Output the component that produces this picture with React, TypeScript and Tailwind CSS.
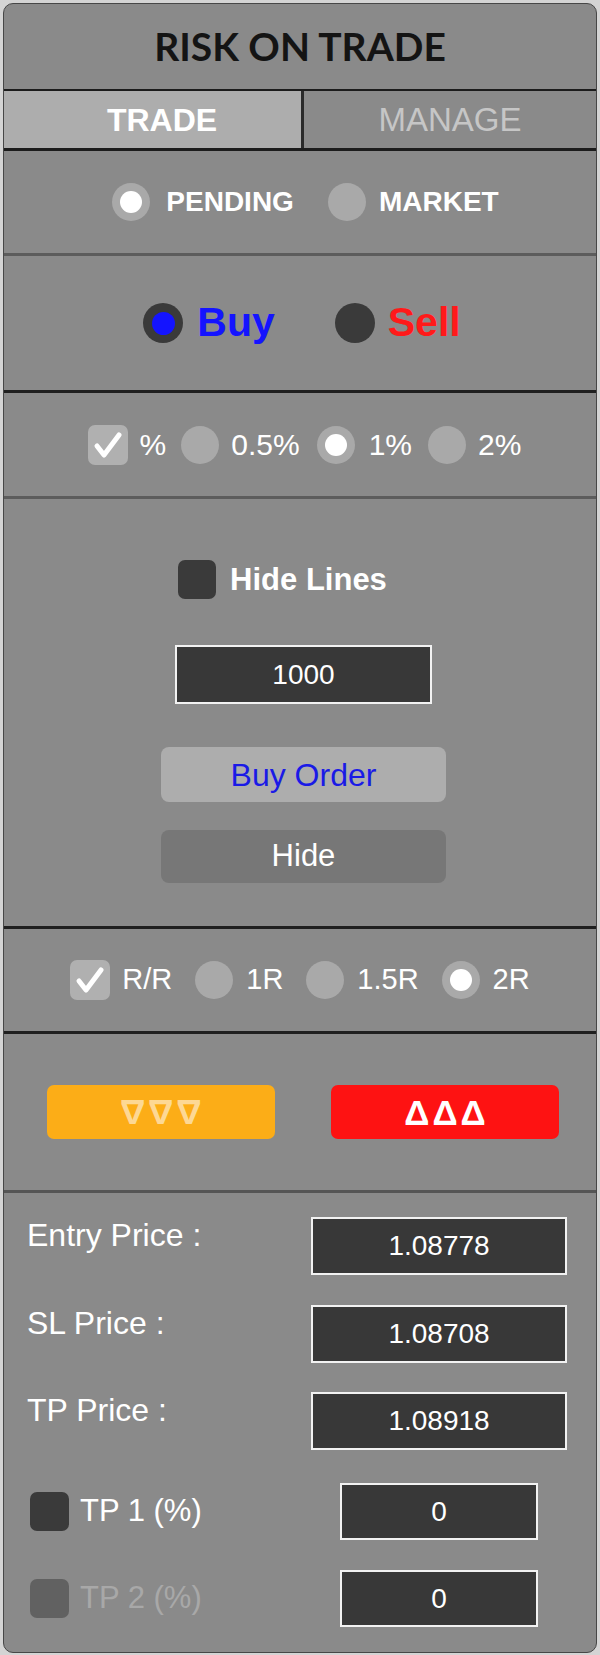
import React from "react"

function LightRadio({ checked }: { checked?: boolean }) {
  return (
    <span className="flex h-[38px] w-[38px] shrink-0 items-center justify-center rounded-full bg-[#a9a9a9]">
      {checked && <span className="h-[22px] w-[22px] rounded-full bg-white" />}
    </span>
  )
}

function CheckMark() {
  return (
    <svg width="40" height="40" viewBox="0 0 40 40" fill="none">
      <path d="M9 21 L16 30 L31 10" stroke="white" strokeWidth={5} strokeLinecap="round" strokeLinejoin="round" />
    </svg>
  )
}

function LightCheck() {
  return (
    <span className="flex h-[40px] w-[40px] shrink-0 items-center justify-center rounded-[7px] bg-[#b0b0b0]">
      <CheckMark />
    </span>
  )
}

function ValueBox({ value, className }: { value: string; className: string }) {
  return (
    <div
      className={
        "flex items-center justify-center border-2 border-[#f2f2f2] bg-[#383838] text-[28px] leading-none text-white " +
        className
      }
    >
      {value}
    </div>
  )
}

function PriceRow({ label, value }: { label: string; value: string }) {
  return (
    <div className="flex items-start justify-between pl-[23px] pr-[29px]">
      <span className="text-[32px] leading-[36px] text-white">{label}</span>
      <ValueBox value={value} className="h-[58px] w-[256px]" />
    </div>
  )
}

function TpRow({ label, disabled }: { label: string; disabled?: boolean }) {
  return (
    <div className="flex items-center justify-between pl-[26px] pr-[29px]">
      <div className="flex items-center gap-[11px]">
        <span className={disabled ? "h-[39px] w-[39px] rounded-[7px] bg-[#616161]" : "h-[39px] w-[39px] rounded-[7px] bg-[#3a3a3a]"} />
        <span className={disabled ? "text-[31px] text-[#a8a8a8]" : "text-[31px] text-white"}>{label}</span>
      </div>
      <div className="flex w-[256px] justify-center">
        <ValueBox value="0" className="h-[57px] w-[198px]" />
      </div>
    </div>
  )
}

export default function App() {
  return (
    <div className="h-[1655px] w-[600px] bg-[#d4d4d4] pl-[3px] pt-[3px] font-['Liberation_Sans',Arial,sans-serif]">
      <div className="flex h-[1650px] w-[594px] flex-col overflow-hidden rounded-[10px] border border-[#474747] bg-[#8a8a8a]">
        {/* title */}
        <div className="flex h-[87px] shrink-0 items-center justify-center border-b-2 border-[#1c1c1c] font-['Lato',sans-serif] text-[39px] font-bold text-[#141414]">
          RISK ON TRADE
        </div>

        {/* tabs */}
        <div className="flex h-[60px] shrink-0 border-b-[3px] border-[#1c1c1c]">
          <div className="flex w-[300px] items-center justify-center border-r-[3px] border-[#2a2a2a] bg-[#adadad] pl-[19px] text-[32px] font-bold text-white">
            TRADE
          </div>
          <div className="flex flex-1 items-center justify-center text-[33px] text-[#c6c6c6]">MANAGE</div>
        </div>

        {/* order type */}
        <div className="flex h-[105px] shrink-0 items-center justify-center border-b-[3px] border-[#5c5c5c] pl-[11px] font-bold text-white">
          <LightRadio checked />
          <span className="ml-[16px] text-[28px]">PENDING</span>
          <span className="ml-[34px]">
            <LightRadio />
          </span>
          <span className="ml-[13px] text-[28px]">MARKET</span>
        </div>

        {/* direction */}
        <div className="flex h-[137px] shrink-0 items-center justify-center border-b-[3px] border-[#1f1f1f] pl-[4px] text-[41px] font-bold">
          <span className="flex h-[40px] w-[40px] items-center justify-center rounded-full bg-[#3a3a3a]">
            <span className="h-[23px] w-[23px] rounded-full bg-[#1414ff]" />
          </span>
          <span className="ml-[14px] text-[#1414ff]">Buy</span>
          <span className="ml-[60px] h-[40px] w-[40px] rounded-full bg-[#3a3a3a]" />
          <span className="ml-[13px] text-[#ff1a1a]">Sell</span>
        </div>

        {/* risk */}
        <div className="flex h-[106px] shrink-0 items-center justify-center border-b-[3px] border-[#5c5c5c] pl-[9px] text-[30px] text-white">
          <LightCheck />
          <span className="ml-[12px]">%</span>
          <span className="ml-[15px]">
            <LightRadio />
          </span>
          <span className="ml-[12px]">0.5%</span>
          <span className="ml-[17px]">
            <LightRadio checked />
          </span>
          <span className="ml-[14px]">1%</span>
          <span className="ml-[16px]">
            <LightRadio />
          </span>
          <span className="ml-[12px]">2%</span>
        </div>

        {/* lines / lot / order */}
        <div className="flex h-[430px] shrink-0 flex-col items-center border-b-[3px] border-[#1f1f1f] pt-[61px]">
          <div className="flex h-[39px] items-center gap-[14px] pr-[35px] leading-none">
            <span className="h-[39px] w-[38px] rounded-[7px] bg-[#3a3a3a]" />
            <span className="text-[31px] font-bold text-white">Hide Lines</span>
          </div>
          <div className="mt-[46px] pl-[7px]">
            <ValueBox value="1000" className="h-[59px] w-[257px] text-[27px]" />
          </div>
          <div className="mt-[43px] pl-[7px]">
            <div className="flex h-[55px] w-[285px] items-center justify-center rounded-[8px] bg-[#adadad] text-[32px] text-[#1a1ae6]">
              Buy Order
            </div>
          </div>
          <div className="mt-[28px] pl-[7px]">
            <div className="flex h-[53px] w-[285px] items-center justify-center rounded-[8px] bg-[#777777] text-[31px] text-white">
              Hide
            </div>
          </div>
        </div>

        {/* reward ratio */}
        <div className="flex h-[105px] shrink-0 items-center justify-center border-b-[3px] border-[#1f1f1f] text-[29px] text-white">
          <LightCheck />
          <span className="ml-[12px]">R/R</span>
          <span className="ml-[23px]">
            <LightRadio />
          </span>
          <span className="ml-[13px]">1R</span>
          <span className="ml-[23px]">
            <LightRadio />
          </span>
          <span className="ml-[13px]">1.5R</span>
          <span className="ml-[23px]">
            <LightRadio checked />
          </span>
          <span className="ml-[13px]">2R</span>
        </div>

        {/* move buttons */}
        <div className="flex h-[159px] shrink-0 items-center gap-[56px] border-b-[3px] border-[#555555] pl-[43px]">
          <div className="flex h-[54px] w-[228px] items-center justify-center rounded-[7px] bg-[#fcad17]">
            <span className="rotate-180 pl-[3px] text-[35px] font-bold leading-none tracking-[3px] text-[#fdd894]">ΔΔΔ</span>
          </div>
          <div className="flex h-[54px] w-[228px] items-center justify-center rounded-[7px] bg-[#fe1212]">
            <span className="pl-[3px] text-[35px] font-bold leading-none tracking-[3px] text-white">ΔΔΔ</span>
          </div>
        </div>

        {/* prices */}
        <div className="flex flex-col pt-[24px]">
          <PriceRow label="Entry Price :" value="1.08778" />
          <div className="mt-[30px]">
            <PriceRow label="SL Price :" value="1.08708" />
          </div>
          <div className="mt-[29px]">
            <PriceRow label="TP Price :" value="1.08918" />
          </div>
          <div className="mt-[33px]">
            <TpRow label="TP 1 (%)" />
          </div>
          <div className="mt-[30px]">
            <TpRow label="TP 2 (%)" disabled />
          </div>
        </div>
      </div>
    </div>
  )
}
